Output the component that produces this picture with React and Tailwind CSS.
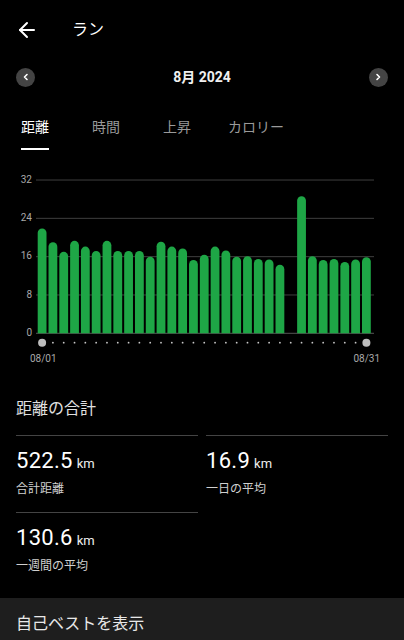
import React from "react";

const VALUES = [21.9, 19.0, 17.0, 19.3, 18.1, 17.2, 19.3, 17.2, 17.2, 17.2, 16.0, 19.1, 18.1, 17.7, 15.3, 16.4, 18.1, 17.3, 16.0, 16.1, 15.5, 15.4, 14.3, 0, 28.6, 16.1, 15.3, 15.5, 14.9, 15.4, 15.9];

const FONT = "Roboto, 'Noto Sans CJK JP', sans-serif";

function Chart() {
  const y0 = 333.3;
  const unit = 4.79;
  const x0 = 37.7;
  const pitch = 10.81;
  const w = 8.8;
  const r = 4.4;
  const ticks = [0, 8, 16, 24, 32];
  return (
    <svg width="404" height="220" viewBox="0 150 404 220" className="block" style={{ fontFamily: FONT }}>
      {ticks.map((t) => {
        const y = y0 - t * unit;
        return (
          <g key={t}>
            <line x1="36" x2="374" y1={y} y2={y} stroke={t === 0 ? "#555" : "#3f3f3f"} strokeWidth="1" />
            <text x="32" y={y} textAnchor="end" dominantBaseline="middle" fontSize="10" fill="#a8a8a8">{t}</text>
          </g>
        );
      })}
      {VALUES.map((v, i) => {
        if (!v) return null;
        const x = x0 + i * pitch;
        const top = y0 - v * unit;
        return (
          <path key={i} d={`M${x},${y0} V${top + r} A${r},${r} 0 0 1 ${x + w},${top + r} V${y0} Z`} fill="#1ea646" />
        );
      })}
      {VALUES.map((_, i) => {
        const cx = x0 + i * pitch + w / 2;
        if (i === 0 || i === VALUES.length - 1) {
          return <circle key={i} cx={cx} cy="342.7" r="4" fill="#bdbdbd" />;
        }
        return <circle key={i} cx={cx} cy="342.7" r="0.9" fill="#c8c8c8" />;
      })}
      <text x="30" y="359" dominantBaseline="middle" fontSize="10" fill="#a8a8a8">08/01</text>
      <text x="380" y="359" textAnchor="end" dominantBaseline="middle" fontSize="10" fill="#a8a8a8">08/31</text>
    </svg>
  );
}

function Stat({ value, label }) {
  return (
    <div className="border-t border-[#444] pt-[11px] pb-[15px]">
      <div className="h-[28px] flex items-baseline leading-[28px]">
        <span className="text-[22px] tracking-[0.3px] text-white">{value}</span>
        <span className="ml-[4px] text-[13px] leading-none text-[#eee]">km</span>
      </div>
      <div className="mt-[6px] text-[12px] leading-[16px] text-[#d0d0d0]">{label}</div>
    </div>
  );
}

export default function App() {
  return (
    <div className="w-[404px] h-[640px] overflow-hidden bg-black flex flex-col text-white" style={{ fontFamily: FONT }}>
      <div className="h-[60px] flex items-center pl-[15px] shrink-0">
        <svg width="24" height="24" viewBox="0 0 24 24" fill="none" stroke="white" strokeWidth="2" strokeLinecap="round" strokeLinejoin="round">
          <path d="M12 19l-7-7 7-7" />
          <path d="M19 12H5" />
        </svg>
        <span className="ml-[33px] text-[16px] leading-6 text-white">ラン</span>
      </div>
      <div className="h-[34px] flex items-center justify-between px-4 shrink-0">
        <div className="w-[19px] h-[19px] rounded-full bg-[#444] flex items-center justify-center">
          <svg width="8" height="8" viewBox="0 0 8 8" fill="none" stroke="white" strokeWidth="1.6" strokeLinecap="round" strokeLinejoin="round">
            <path d="M5 1.5L2.5 4 5 6.5" />
          </svg>
        </div>
        <span className="text-[14px] font-bold leading-5 text-[#f0f0f0]">8月 2024</span>
        <div className="w-[19px] h-[19px] rounded-full bg-[#444] flex items-center justify-center">
          <svg width="8" height="8" viewBox="0 0 8 8" fill="none" stroke="white" strokeWidth="1.6" strokeLinecap="round" strokeLinejoin="round">
            <path d="M3 1.5L5.5 4 3 6.5" />
          </svg>
        </div>
      </div>
      <div className="flex items-start pl-[21px] pt-[23px] shrink-0 text-[14px] leading-5">
        <div className="flex flex-col">
          <span className="text-white">距離</span>
          <div className="mt-[11px] h-[2px] bg-white" />
        </div>
        <span className="ml-[43px] text-[#9a9a9a]">時間</span>
        <span className="ml-[43px] text-[#9a9a9a]">上昇</span>
        <span className="ml-[37px] text-[#9a9a9a]">カロリー</span>
      </div>
      <div className="shrink-0">
        <Chart />
      </div>
      <div className="px-4 shrink-0">
        <div className="mt-[27px] text-[16px] leading-6 text-[#e0e0e0]">距離の合計</div>
        <div className="mt-[14px] grid grid-cols-2 gap-x-2">
          <Stat value="522.5" label="合計距離" />
          <Stat value="16.9" label="一日の平均" />
          <Stat value="130.6" label="一週間の平均" />
        </div>
      </div>
      <div className="mt-[9px] flex-1 bg-[#1e1e1e] px-4 pt-[14px]">
        <span className="text-[16px] leading-6 text-[#e8e8e8]">自己ベストを表示</span>
      </div>
    </div>
  );
}
